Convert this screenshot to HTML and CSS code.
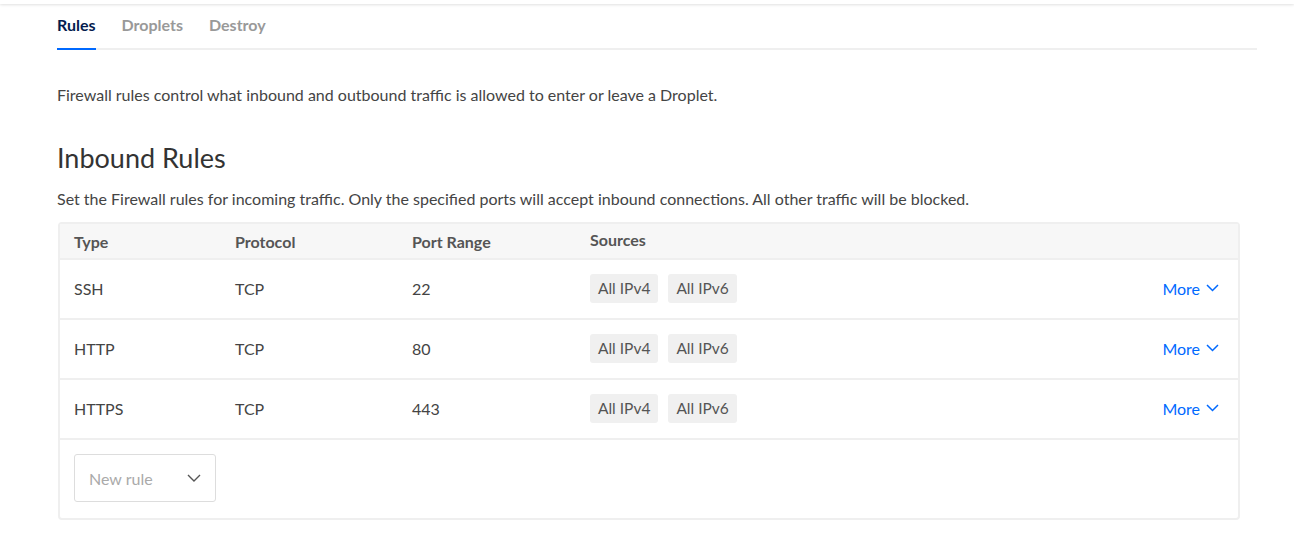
FILE: index.html
```html
<!DOCTYPE html>
<html lang="en">
<head>
<meta charset="utf-8">
<title>Firewall Rules</title>
<link rel="stylesheet" href="styles.css">
</head>
<body>
<div class="topbar"></div>
<main class="page">
  <nav class="tabs">
    <a class="tab active">Rules</a>
    <a class="tab">Droplets</a>
    <a class="tab">Destroy</a>
  </nav>
  <p class="intro">Firewall rules control what inbound and outbound traffic is allowed to enter or leave a Droplet.</p>
  <h2 class="section-title">Inbound Rules</h2>
  <p class="section-desc">Set the Firewall rules for incoming traffic. Only the specified ports will accept inbound connections. All other traffic will be blocked.</p>
  <div class="rules">
    <div class="row head">
      <div class="cell c-type">Type</div>
      <div class="cell c-proto">Protocol</div>
      <div class="cell c-port">Port Range</div>
      <div class="cell c-src src-head">Sources</div>
    </div>
    <div class="row">
      <div class="cell c-type">SSH</div>
      <div class="cell c-proto">TCP</div>
      <div class="cell c-port">22</div>
      <div class="cell c-src"><span class="tag">All IPv4</span><span class="tag">All IPv6</span></div>
      <div class="cell c-more"><a class="more">More <svg width="13" height="8" viewBox="0 0 13 8"><path d="M1 1l5.5 5.5L12 1" fill="none" stroke="currentColor" stroke-width="1.5"/></svg></a></div>
    </div>
    <div class="row">
      <div class="cell c-type">HTTP</div>
      <div class="cell c-proto">TCP</div>
      <div class="cell c-port">80</div>
      <div class="cell c-src"><span class="tag">All IPv4</span><span class="tag">All IPv6</span></div>
      <div class="cell c-more"><a class="more">More <svg width="13" height="8" viewBox="0 0 13 8"><path d="M1 1l5.5 5.5L12 1" fill="none" stroke="currentColor" stroke-width="1.5"/></svg></a></div>
    </div>
    <div class="row">
      <div class="cell c-type">HTTPS</div>
      <div class="cell c-proto">TCP</div>
      <div class="cell c-port">443</div>
      <div class="cell c-src"><span class="tag">All IPv4</span><span class="tag">All IPv6</span></div>
      <div class="cell c-more"><a class="more">More <svg width="13" height="8" viewBox="0 0 13 8"><path d="M1 1l5.5 5.5L12 1" fill="none" stroke="currentColor" stroke-width="1.5"/></svg></a></div>
    </div>
    <div class="footer">
      <div class="select">
        <span>New rule</span>
        <svg width="14" height="8" viewBox="0 0 14 8"><path d="M1 1l6 6 6-6" fill="none" stroke="#555" stroke-width="1.4"/></svg>
      </div>
    </div>
  </div>
</main>
</body>
</html>
```

FILE: styles.css
```css
* { box-sizing: border-box; }
body {
  margin: 0;
  background: #fff;
  font-family: Lato, "Liberation Sans", sans-serif;
  color: #444;
}
.topbar {
  height: 4px;
  background: #fff;
  box-shadow: 0 1px 3px rgba(0,0,0,0.12);
}
.page {
  padding: 0 37px 0 57px;
}
.tabs {
  display: flex;
  gap: 26px;
  border-bottom: 2px solid #efefef;
  height: 46px;
}
.tab {
  font-size: 16px;
  font-weight: 700;
  color: #999;
  padding-top: 11px;
  margin-bottom: -2px;
  border-bottom: 2px solid transparent;
}
.tab.active {
  color: #031b4e;
  border-bottom-color: #0069ff;
}
.intro {
  margin: 36px 0 0;
  font-size: 16px;
  line-height: 18px;
  color: #444;
}
.section-title {
  margin: 39px 0 0;
  font-size: 27px;
  font-weight: 400;
  line-height: 30px;
  color: #333;
}
.section-desc {
  margin: 17px 0 0;
  font-size: 16px;
  line-height: 18px;
  color: #444;
}
.rules {
  margin: 14px 17px 0 1px;
  border: 2px solid #efefef;
  border-radius: 4px;
}
.row {
  display: flex;
  align-items: center;
  height: 60px;
  padding-bottom: 2px;
  border-bottom: 2px solid #efefef;
  font-size: 16px;
  color: #444;
}
.row.head {
  height: 36px;
  padding-bottom: 0;
  background: #f7f7f7;
  font-weight: 700;
  color: #555;
}
.cell { padding-left: 14px; }
.c-type { width: 161px; }
.c-proto { width: 177px; }
.c-port { width: 178px; }
.c-src { flex: 1; display: flex; gap: 10px; padding-left: 14px; }
.src-head { margin-top: -4px; }
.c-more { padding-right: 19px; }
.tag {
  background: #f0f0f0;
  border-radius: 3px;
  padding: 0 8px;
  height: 29px;
  line-height: 29px;
  font-size: 15.5px;
  color: #555;
}
.more {
  color: #0069ff;
  display: flex;
  align-items: center;
  gap: 6px;
  font-size: 16px;
}
.footer {
  height: 78px;
  padding: 14px 14px;
}
.select {
  width: 142px;
  height: 48px;
  border: 1px solid #ddd;
  border-radius: 3px;
  display: flex;
  align-items: center;
  justify-content: space-between;
  padding: 0 14px;
  font-size: 16px;
  color: #aaa;
}
```
